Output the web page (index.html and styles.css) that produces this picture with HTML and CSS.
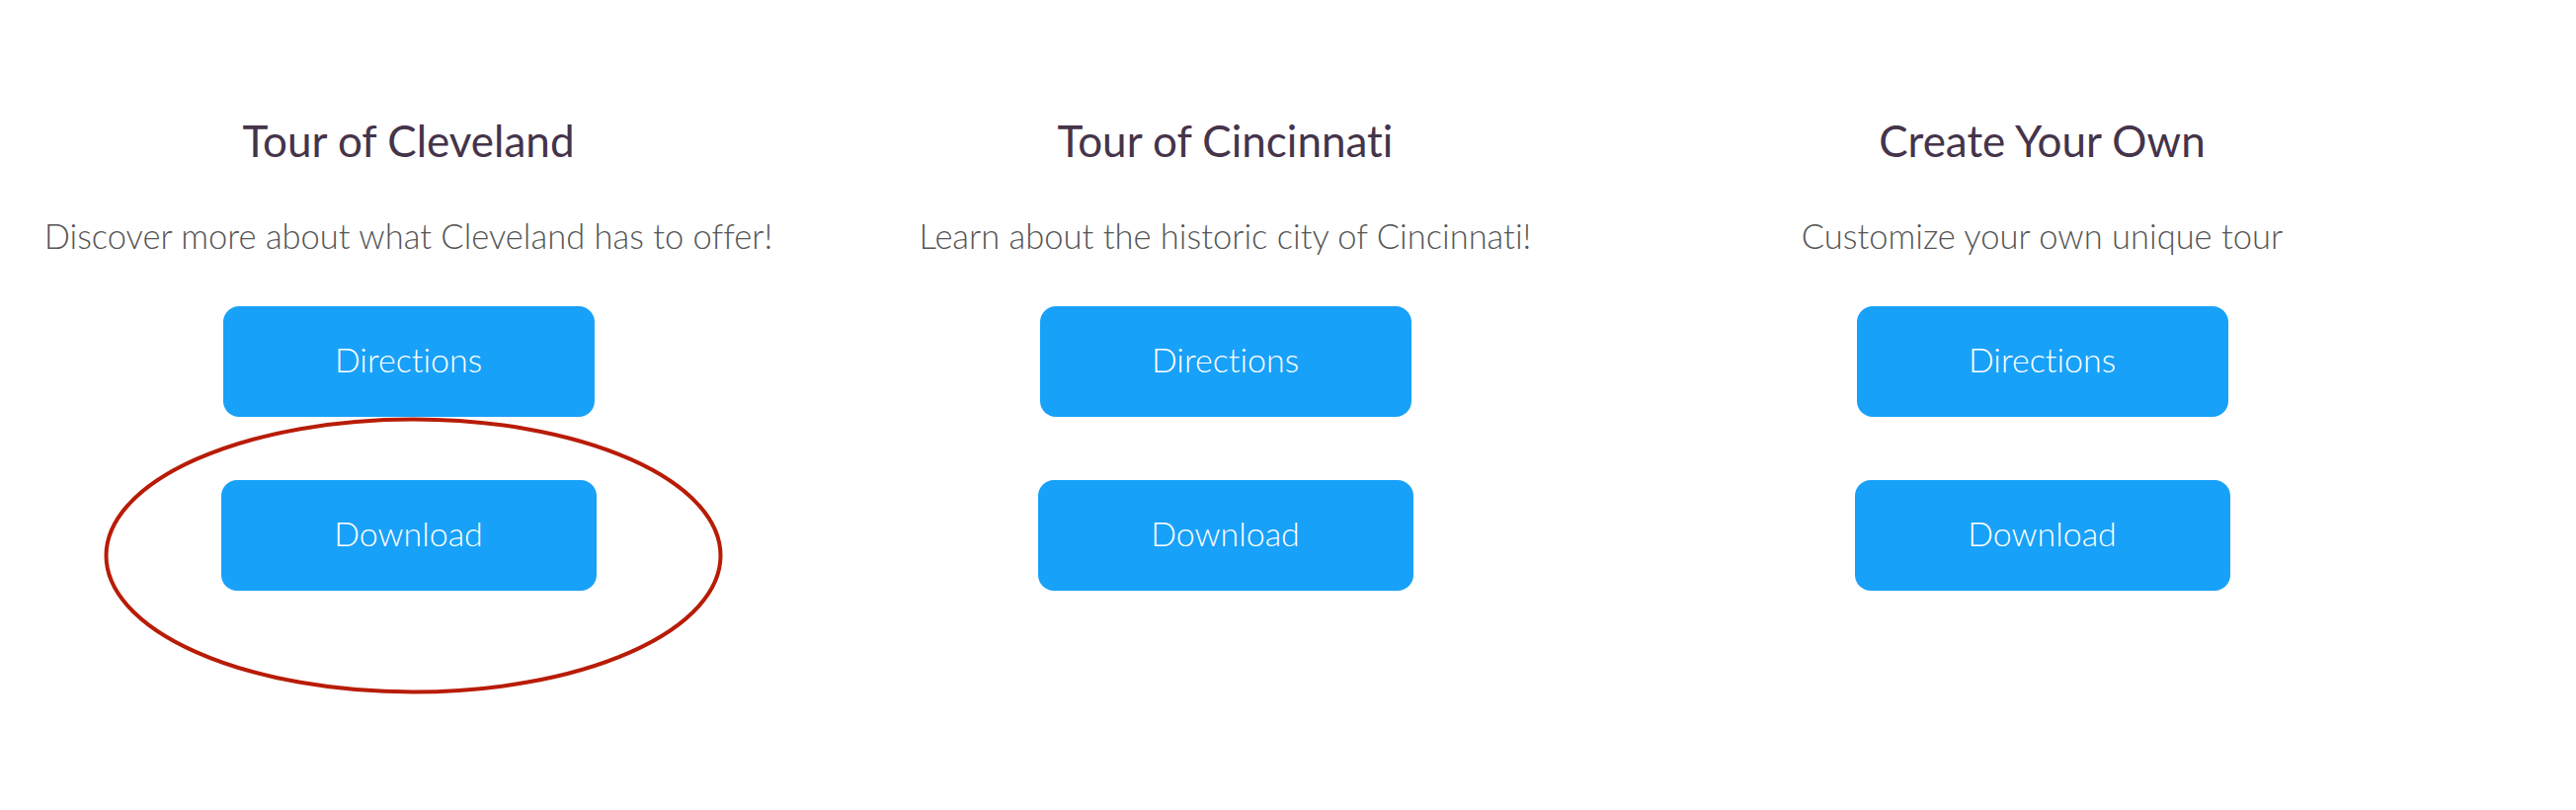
FILE: index.html
```html
<!DOCTYPE html>
<html lang="en">
<head>
<meta charset="utf-8">
<title>Tours</title>
<link rel="stylesheet" href="styles.css">
</head>
<body>
<main class="tours">
  <section class="tour">
    <h2 class="tour-title">Tour of Cleveland</h2>
    <p class="tour-desc">Discover more about what Cleveland has to offer!</p>
    <a class="btn btn-directions" href="#">Directions</a>
    <a class="btn btn-download" href="#">Download</a>
    <svg class="highlight-ring" width="627" height="281" viewBox="0 0 627 281" aria-hidden="true">
      <ellipse cx="313.5" cy="140.5" rx="311" ry="138" fill="none" stroke="#b81c06" stroke-width="4"/>
    </svg>
  </section>
  <section class="tour">
    <h2 class="tour-title">Tour of Cincinnati</h2>
    <p class="tour-desc">Learn about the historic city of Cincinnati!</p>
    <a class="btn btn-directions" href="#">Directions</a>
    <a class="btn btn-download" href="#">Download</a>
  </section>
  <section class="tour">
    <h2 class="tour-title">Create Your Own</h2>
    <p class="tour-desc">Customize your own unique tour</p>
    <a class="btn btn-directions" href="#">Directions</a>
    <a class="btn btn-download" href="#">Download</a>
  </section>
</main>
</body>
</html>
```

FILE: styles.css
```css
html, body {
  margin: 0;
  padding: 0;
  background: #ffffff;
}

body {
  font-family: Lato, "Open Sans", "Liberation Sans", sans-serif;
  font-variant-ligatures: none;
}

.tours {
  display: grid;
  grid-template-columns: repeat(3, 827px);
  padding-top: 112px;
  min-height: 708px;
}

.tour {
  position: relative;
  display: flex;
  flex-direction: column;
  align-items: center;
}

.tour-title {
  margin: 0;
  font-size: 44px;
  line-height: 60px;
  font-weight: 400;
  color: #45344a;
}

.tour-desc {
  margin: 45px 0 0;
  font-size: 34.5px;
  line-height: 44px;
  font-weight: 300;
  color: #555555;
}

.btn {
  display: flex;
  align-items: center;
  justify-content: center;
  box-sizing: border-box;
  height: 112px;
  padding-bottom: 5px;
  border-radius: 16px;
  background: #18a1f8;
  color: #ffffff;
  font-size: 34px;
  font-weight: 300;
  text-decoration: none;
}

.btn-directions {
  width: 376px;
  margin-top: 49px;
}

.btn-download {
  width: 380px;
  margin-top: 64px;
}

.highlight-ring {
  position: absolute;
  left: 105px;
  top: 310px;
  pointer-events: none;
}
```
